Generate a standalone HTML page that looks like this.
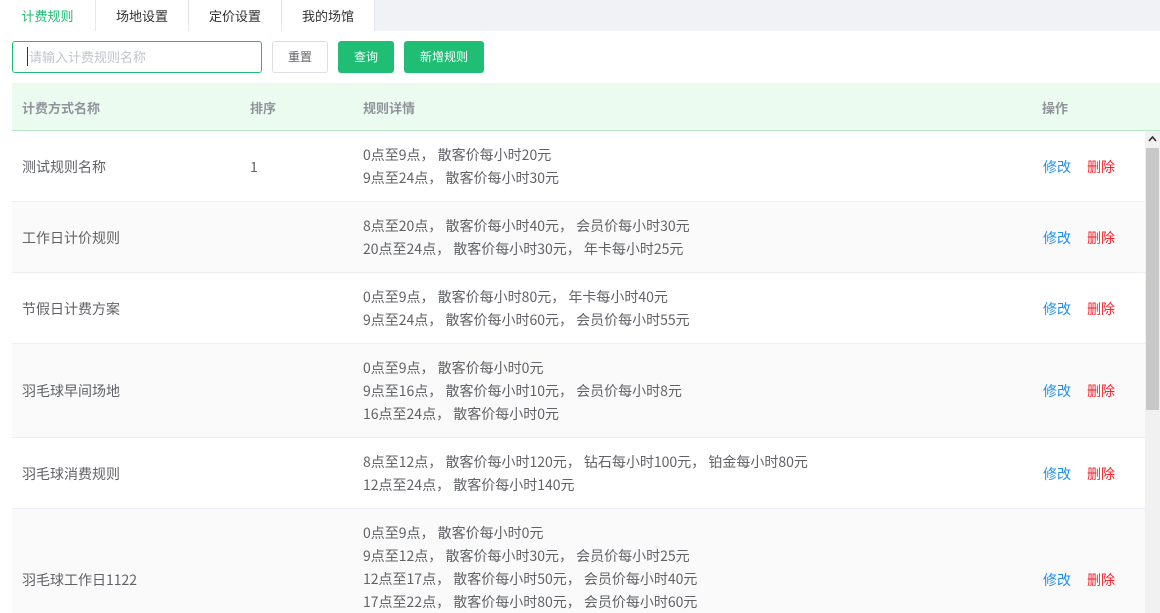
<!DOCTYPE html>
<html><head><meta charset="utf-8"><style>
*{margin:0;padding:0;box-sizing:border-box}
html,body{width:1160px;height:613px;overflow:hidden}
body{background:#fff;font-family:"Noto Sans CJK SC","Liberation Sans",sans-serif;font-size:14px;color:#606266;position:relative}
.tabs{position:absolute;left:0;top:0;width:1160px;height:31px;background:#f0f2f5;font-size:13px}
.tab{position:absolute;top:0;height:31px;background:#fff;border-right:1px solid #e4e7ed;line-height:31px;text-align:center;color:#303133}
.tab.a{color:#1fbe74}
.btn{position:absolute;top:41px;height:32px;border-radius:3px;line-height:32px;text-align:center;font-size:12px}
.hdr{position:absolute;left:12px;top:83px;width:1148px;height:48px;background:#ebfbf0;border-bottom:1px solid #b3e6c8;font-weight:bold;color:#909399;font-size:13px}
.hdr span,.row span{position:absolute;line-height:20px}
.row{position:absolute;left:12px;width:1133px;border-bottom:1px solid #ebeef5}
.row.g{background:#fafafa}
.row span.d{line-height:23px}
.e{color:#1e8ff0}.x{color:#f5222d}
.sb{position:absolute;left:1145px;top:131px;width:15px;height:482px;background:#f1f1f1}
.th{position:absolute;left:1146px;top:148px;width:13px;height:262px;background:#c8c8c8}
</style></head><body>
<div class="tabs">
<div class="tab a" style="left:0;width:96px">计费规则</div>
<div class="tab" style="left:96px;width:93px">场地设置</div>
<div class="tab" style="left:189px;width:93px">定价设置</div>
<div class="tab" style="left:282px;width:93px">我的场馆</div>
</div>
<div style="position:absolute;left:0;top:31px;width:1160px;height:582px;background:#fff"></div>
<div style="position:absolute;left:12px;top:41px;width:250px;height:32px;border:1px solid #1fbe74;border-radius:3px;padding-left:14px;color:#c0c4cc;line-height:30px;font-size:13px"><span style="border-left:1px solid #333;margin-right:1px"></span>请输入计费规则名称</div>
<div class="btn" style="left:272px;width:56px;border:1px solid #dcdfe6;color:#606266;line-height:30px">重置</div>
<div class="btn" style="left:338px;width:56px;background:#1fbe74;color:#fff">查询</div>
<div class="btn" style="left:404px;width:80px;background:#1fbe74;color:#fff">新增规则</div>
<div class="hdr"><span style="left:10px;top:15px">计费方式名称</span><span style="left:238px;top:15px">排序</span><span style="left:351px;top:15px">规则详情</span><span style="left:1030px;top:15px">操作</span></div>

<div class="row" style="top:131px;height:71px"><span style="left:10px;top:26px">测试规则名称</span><span style="left:238px;top:26px">1</span><span class="d" style="left:351px;top:13px">0点至9点， 散客价每小时20元<br>9点至24点， 散客价每小时30元</span><span class="e" style="left:1031px;top:26px">修改</span><span class="x" style="left:1075px;top:26px">删除</span></div>
<div class="row g" style="top:202px;height:71px"><span style="left:10px;top:26px">工作日计价规则</span><span class="d" style="left:351px;top:13px">8点至20点， 散客价每小时40元， 会员价每小时30元<br>20点至24点， 散客价每小时30元， 年卡每小时25元</span><span class="e" style="left:1031px;top:26px">修改</span><span class="x" style="left:1075px;top:26px">删除</span></div>
<div class="row" style="top:273px;height:71px"><span style="left:10px;top:26px">节假日计费方案</span><span class="d" style="left:351px;top:13px">0点至9点， 散客价每小时80元， 年卡每小时40元<br>9点至24点， 散客价每小时60元， 会员价每小时55元</span><span class="e" style="left:1031px;top:26px">修改</span><span class="x" style="left:1075px;top:26px">删除</span></div>
<div class="row g" style="top:344px;height:94px"><span style="left:10px;top:37px">羽毛球早间场地</span><span class="d" style="left:351px;top:13px">0点至9点， 散客价每小时0元<br>9点至16点， 散客价每小时10元， 会员价每小时8元<br>16点至24点， 散客价每小时0元</span><span class="e" style="left:1031px;top:37px">修改</span><span class="x" style="left:1075px;top:37px">删除</span></div>
<div class="row" style="top:438px;height:71px"><span style="left:10px;top:26px">羽毛球消费规则</span><span class="d" style="left:351px;top:13px">8点至12点， 散客价每小时120元， 钻石每小时100元， 铂金每小时80元<br>12点至24点， 散客价每小时140元</span><span class="e" style="left:1031px;top:26px">修改</span><span class="x" style="left:1075px;top:26px">删除</span></div>
<div class="row g" style="top:509px;height:104px;border-bottom:none"><span style="left:10px;top:61px">羽毛球工作日1122</span><span class="d" style="left:351px;top:13px">0点至9点， 散客价每小时0元<br>9点至12点， 散客价每小时30元， 会员价每小时25元<br>12点至17点， 散客价每小时50元， 会员价每小时40元<br>17点至22点， 散客价每小时80元， 会员价每小时60元</span><span class="e" style="left:1031px;top:61px">修改</span><span class="x" style="left:1075px;top:61px">删除</span></div>

<div class="sb"></div><div class="th"></div>
<svg style="position:absolute;left:1147px;top:134px" width="11" height="9"><path d="M2 7 L5.5 3 L9 7" stroke="#333" stroke-width="1.6" fill="none"/></svg>
</body></html>
